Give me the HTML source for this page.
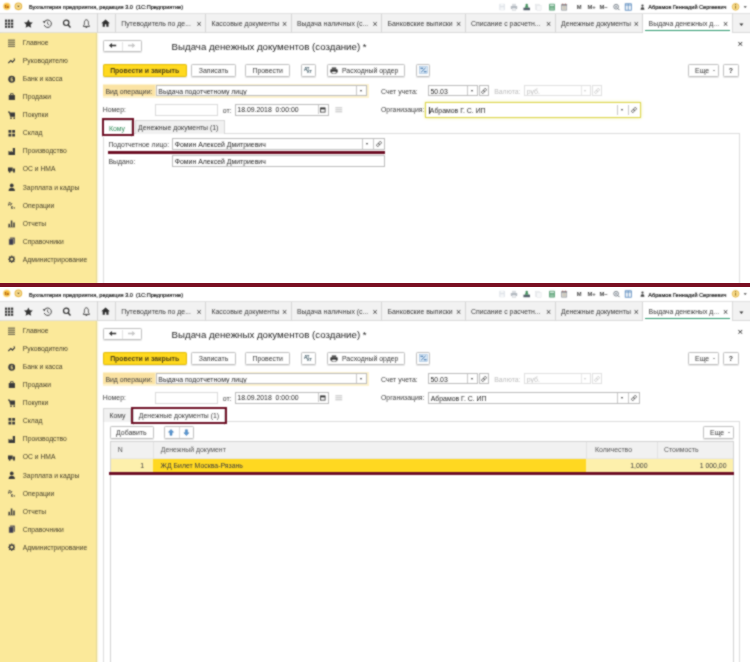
<!DOCTYPE html>
<html><head><meta charset="utf-8"><title>1C</title><style>
html,body{margin:0;padding:0;background:#fff}
body{width:750px;height:662px;position:relative;overflow:hidden;font-family:"Liberation Sans",sans-serif;font-size:7px;color:#333}
.scr{position:absolute;left:0;width:750px;overflow:hidden;will-change:transform;background:#fff;filter:url(#bl)}
.ab{position:absolute;white-space:nowrap}
.tb{position:absolute;left:0;top:0;width:750px;height:13px;background:#fff}
.tt{font-size:5.6px;line-height:7px;color:#151515;-webkit-text-stroke:0.18px #222}
.bar{position:absolute;left:0;top:13.2px;width:750px;height:19.6px;background:#f2f2f2;border-top:1px solid #e0e0e0;border-bottom:1px solid #dadada;box-sizing:border-box}
.tab{position:absolute;top:14.2px;height:18.6px;box-sizing:border-box;border-left:1px solid #d6d6d6;font-size:6.9px;line-height:18px;color:#383838;white-space:nowrap}
.tab .tl{position:absolute;left:5.2px;top:0.7px}
.tab .tx{position:absolute;right:3.6px;top:0.5px;font-size:8.8px;color:#444}
.tab.act{background:#fff}
.tab.act:after{content:"";position:absolute;left:1.5px;right:1.5px;top:15.6px;height:1.5px;background:#2f9a70}
.tab.act .tx{right:3.6px}
.side{position:absolute;left:0;top:32.8px;width:97px;background:#fbe99a;border-right:1px solid #e3d896;box-sizing:border-box;box-shadow:1px 0 1.5px rgba(250,240,190,.8)}
.sl{font-size:6.75px;line-height:8.4px;color:#453f2a}
.h1{font-size:9.7px;line-height:11.6px;color:#1c1c1c}
.btn{box-sizing:border-box;border:1px solid #c0c0c0;border-radius:1.6px;background:#fff;font-size:6.9px;line-height:11.6px;text-align:center;color:#363636;box-shadow:0 0.6px 0.8px rgba(0,0,0,.10)}
.btn.y{background:#ffd91f;border-color:#e3bd0a;color:#4a3f18}
.lb{font-size:6.9px;line-height:8.2px;color:#3c3c3c}
.inp{box-sizing:border-box;border:1px solid #bcbcbc;background:#fff;font-size:6.9px;line-height:8.2px;padding:1px 0 0 1.8px;color:#262626;overflow:hidden}
.vs{width:1px;background:#c8c8c8}
.dd{width:0;height:0;border-left:1.7px solid transparent;border-right:1.7px solid transparent;border-top:2.1px solid #444}
.ftab{box-sizing:border-box;border:1px solid #d6d6d6;border-bottom:none;background:#f1f1f1;font-size:6.9px;line-height:14.6px;text-align:center;color:#383838}
.ftab.on{background:#fff;line-height:14.6px}
.red{box-sizing:border-box;border:2.2px solid #6e1026}
</style></head><body>
<svg width="0" height="0" style="position:absolute"><filter id="bl" x="0" y="0" width="100%" height="100%" color-interpolation-filters="sRGB"><feConvolveMatrix order="3" kernelMatrix="1 2 1 2 8 2 1 2 1" divisor="20" edgeMode="duplicate"/></filter></svg>
<div class="scr" style="top:0px;height:283px">
<div class="tb"></div>
<svg class="ab" style="left:2px;top:2px" width="22" height="10" viewBox="0 0 22 10"><defs><radialGradient id="lg1"><stop offset="0.45" stop-color="#f6b62e"/><stop offset="1" stop-color="#fde6a0"/></radialGradient></defs><circle cx="4.8" cy="4.3" r="3.9" fill="url(#lg1)"/><text x="2.5" y="5.8" font-size="4.2" font-weight="bold" fill="#8a3a0c" font-family="Liberation Sans">1с</text><circle cx="16.4" cy="4.3" r="3.3" fill="#f7dc92" stroke="#e6b648" stroke-width="1.1"/><path d="M15.1 3.7h2.6l-1.3 1.6z" fill="#5a3c08"/></svg>
<div class="ab tt" style="left:29px;top:4.4px">Бухгалтерия предприятия, редакция 3.0&nbsp; (1С:Предприятие)</div>
<svg class="ab" style="left:496px;top:1px" width="254" height="12" viewBox="0 0 254 12"><g transform="translate(6.4 6.2) scale(0.8) translate(-6.4 -6.2)"><g opacity="0.55"><rect x="2.5" y="2" width="7" height="8" rx="0.8" fill="#c5cdd6"/><rect x="4" y="2" width="4" height="2.6" fill="#eef1f4"/><rect x="3.8" y="6.2" width="4.4" height="3.8" fill="#eef1f4"/></g></g><g transform="translate(18 6.2) scale(0.8) translate(-18 -6.2)"><g opacity="0.75"><rect x="14" y="4.6" width="8" height="4" rx="0.8" fill="#9aa2ab"/><rect x="15.6" y="2" width="4.8" height="2.8" fill="#c9ced4"/><rect x="15.6" y="7.2" width="4.8" height="3" fill="#e6e9ec" stroke="#9aa2ab" stroke-width="0.4"/></g></g><g transform="translate(30.7 6.2) scale(0.8) translate(-30.7 -6.2)"><g><rect x="26.6" y="6.8" width="8.2" height="3.2" fill="#55606b"/><circle cx="30.7" cy="3.4" r="1.5" fill="#3f8f5a"/><path d="M28.4 7c0-2 1-2.4 2.3-2.4s2.3 0.4 2.3 2.4z" fill="#3f8f5a"/></g></g><g transform="translate(42.4 6.2) scale(0.8) translate(-42.4 -6.2)"><g opacity="0.45"><rect x="38.4" y="2.4" width="5.4" height="6.8" fill="#e4e7ea" stroke="#aab1b8" stroke-width="0.5"/><rect x="40.4" y="4" width="5.4" height="6" fill="#eef0f2" stroke="#aab1b8" stroke-width="0.5"/></g></g><g transform="translate(56 6.2) scale(0.8) translate(-56 -6.2)"><g><rect x="52.4" y="1.8" width="7.2" height="8.6" rx="0.6" fill="#4f9a6c"/><rect x="53.4" y="2.8" width="5.2" height="2" fill="#d7eadf"/><path d="M53.4 6.2h5.2M53.4 7.8h5.2M53.4 9.3h5.2" stroke="#cfe6d8" stroke-width="0.7"/></g></g><g transform="translate(68.1 6.2) scale(0.8) translate(-68.1 -6.2)"><g><rect x="64.4" y="2.2" width="7.4" height="8" rx="0.6" fill="#8a8f96"/><rect x="65.2" y="4.4" width="5.8" height="5" fill="#f0efe9"/><path d="M66 5.6h4.2M66 7h4.2M66 8.4h4.2" stroke="#9b8f7b" stroke-width="0.6"/><path d="M66.3 1.6v1.6M69.9 1.6v1.6" stroke="#b0463c" stroke-width="0.8"/></g></g><text x="80.8" y="8.4" font-size="5.8" font-weight="bold" fill="#444" font-family="Liberation Sans">M</text><text x="91.4" y="8.4" font-size="5.8" font-weight="bold" fill="#444" font-family="Liberation Sans">M+</text><text x="103.4" y="8.4" font-size="5.8" font-weight="bold" fill="#444" font-family="Liberation Sans">M−</text><g transform="translate(120.6 6.2) scale(0.8) translate(-120.6 -6.2)"><g><circle cx="120" cy="5.6" r="3" fill="#eef2f5" stroke="#5d6670" stroke-width="0.9"/><path d="M122.2 7.8l2 2" stroke="#5d6670" stroke-width="1.2"/><path d="M118.6 5.6h2.8M120 4.2v2.8" stroke="#5d6670" stroke-width="0.6"/></g></g><g transform="translate(132.4 6) scale(0.8) translate(-132.4 -6)"><g><rect x="128.4" y="2" width="7.6" height="8" fill="#f2f6fa" stroke="#3f78b4" stroke-width="0.9"/><path d="M132.2 2v8M128.4 3.6h7.6" stroke="#3f78b4" stroke-width="0.8"/></g></g><g fill="#444"><circle cx="146.5" cy="4.6" r="1.15"/><path d="M144.6 8.8c0-2 0.8-2.5 1.9-2.5s1.9 0.5 1.9 2.5z"/></g><circle cx="239.6" cy="5.8" r="3.4" fill="#f8dc8c" stroke="#dfae3a" stroke-width="0.7"/><path d="M239.6 4.8v2.8" stroke="#8a6410" stroke-width="0.9"/><circle cx="239.6" cy="3.6" r="0.55" fill="#8a6410"/><path d="M247.6 5.2h3.2l-1.6 1.8z" fill="#444"/></svg>
<div class="ab tt" style="left:648.3px;top:4.4px">Абрамов Геннадий Сергеевич</div>
<div class="bar"></div>
<svg class="ab" style="left:0.2px;top:12.7px" width="97" height="19" viewBox="0 0 97 19"><g fill="#333"><rect x="5" y="6.6" width="2.2" height="2.2"/><rect x="8" y="6.6" width="2.2" height="2.2"/><rect x="11" y="6.6" width="2.2" height="2.2"/><rect x="5" y="9.6" width="2.2" height="2.2"/><rect x="8" y="9.6" width="2.2" height="2.2"/><rect x="11" y="9.6" width="2.2" height="2.2"/><rect x="5" y="12.6" width="2.2" height="2.2"/><rect x="8" y="12.6" width="2.2" height="2.2"/><rect x="11" y="12.6" width="2.2" height="2.2"/></g><path d="M28.4 6.4l1.3 2.9l3.1 0.3l-2.3 2.1l0.7 3.1l-2.8-1.6l-2.8 1.6l0.7-3.1l-2.3-2.1l3.1-0.3z" fill="#333"/><g stroke="#444" fill="none"><path d="M44.8 8.4a3.7 3.7 0 1 1-0.6 3.6" stroke-width="1"/><path d="M47.6 8.6v2.4l1.6 1" stroke-width="0.8"/></g><path d="M42.6 8.4l2.8-0.6l-0.8 2.6z" fill="#444"/><circle cx="66.2" cy="9.8" r="2.7" stroke="#333" stroke-width="1.2" fill="none"/><path d="M68.2 12l2.3 2.5" stroke="#333" stroke-width="1.4"/><path d="M83.4 13.4h6v-0.6c-1-0.6-1-1.6-1-3.2c0-1.6-0.8-2.8-2-2.8s-2 1.2-2 2.8c0 1.6 0 2.6-1 3.2z" stroke="#333" stroke-width="0.9" fill="none"/><path d="M85.6 14.4h1.6" stroke="#333" stroke-width="0.9"/></svg>
<div class="ab" style="left:96.5px;top:13.2px;width:1px;height:19.6px;background:#d4d4d4"></div>
<svg class="ab" style="left:100.9px;top:18.5px" width="9.2" height="8.3" viewBox="0 0 10 9"><path d="M5 0.4L0.4 4.6h1.4v3.8h2.4V5.8h1.6v2.6h2.4V4.6h1.4z" fill="#2f2f2f"/></svg>
<div class="tab" style="left:115px;width:90.30000000000001px"><span class="tl">Путеводитель по де...</span><span class="tx">×</span></div>
<div class="tab" style="left:205.3px;width:85.5px"><span class="tl">Кассовые документы</span><span class="tx">×</span></div>
<div class="tab" style="left:290.8px;width:90.5px"><span class="tl">Выдача наличных (с...</span><span class="tx">×</span></div>
<div class="tab" style="left:381.3px;width:83.5px"><span class="tl">Банковские выписки</span><span class="tx">×</span></div>
<div class="tab" style="left:464.8px;width:89.99999999999994px"><span class="tl">Списание с расчетн...</span><span class="tx">×</span></div>
<div class="tab" style="left:554.8px;width:87.60000000000002px"><span class="tl">Денежные документы</span><span class="tx">×</span></div>
<div class="tab act" style="left:642.4px;width:89.39999999999998px"><span class="tl">Выдача денежных д...</span><span class="tx">×</span></div>
<div class="ab" style="left:731.8px;top:13.2px;width:1px;height:19.6px;background:#d9d9d9"></div>
<svg class="ab" style="left:738px;top:23.4px" width="8" height="5" viewBox="0 0 8 5"><path d="M1.4 0.6h4l-2 2.3z" fill="#333"/></svg>
<div class="side" style="height:251px"></div>
<svg class="ab" style="left:7.6px;top:38.7px" width="7.5" height="8.44" viewBox="0 0 8 9"><path d="M0 1.2h8M0 3.4h8M0 5.6h8M0 7.8h8" stroke="#333" stroke-width="0.9" fill="none"/></svg>
<div class="ab sl" style="left:22.8px;top:39.0px">Главное</div>
<svg class="ab" style="left:7.6px;top:56.8px" width="7.5" height="8.44" viewBox="0 0 8 9"><path d="M0.3 6.5L3 3.8L4.8 5.4L7.6 2.4" stroke="#3b3b3b" stroke-width="1.3" fill="none"/><path d="M5.6 1.6h2.6v2.6z" fill="#3b3b3b"/></svg>
<div class="ab sl" style="left:22.8px;top:57.1px">Руководителю</div>
<svg class="ab" style="left:7.6px;top:74.8px" width="7.5" height="8.44" viewBox="0 0 8 9"><circle cx="4" cy="4.5" r="3.7" fill="#3b3b3b"/><path d="M3 3h2.2M3.3 3v3.2h1.6V4.6H3.3" stroke="#fbe99a" stroke-width="0.8" fill="none"/></svg>
<div class="ab sl" style="left:22.8px;top:75.1px">Банк и касса</div>
<svg class="ab" style="left:7.6px;top:92.9px" width="7.5" height="8.44" viewBox="0 0 8 9"><path d="M0.8 2.2h6.6v5.2H0.8z" fill="#3b3b3b"/><path d="M2.7 2.2V0.7h2.8v1.5" stroke="#3b3b3b" stroke-width="0.9" fill="none"/></svg>
<div class="ab sl" style="left:22.8px;top:93.2px">Продажи</div>
<svg class="ab" style="left:7.6px;top:110.9px" width="7.5" height="8.44" viewBox="0 0 8 9"><path d="M0 1h1.5l1.2 4.6h4.6l0.9-3.4H2" stroke="#3b3b3b" stroke-width="1.1" fill="#3b3b3b"/><circle cx="3.2" cy="7.6" r="0.9" fill="#3b3b3b"/><circle cx="6.6" cy="7.6" r="0.9" fill="#3b3b3b"/></svg>
<div class="ab sl" style="left:22.8px;top:111.2px">Покупки</div>
<svg class="ab" style="left:7.6px;top:129.0px" width="7.5" height="8.44" viewBox="0 0 8 9"><path d="M0.5 1h3v3h-3zM4.5 1h3v3h-3zM0.5 5h3v3h-3zM4.5 5h3v3h-3z" fill="#3b3b3b"/></svg>
<div class="ab sl" style="left:22.8px;top:129.3px">Склад</div>
<svg class="ab" style="left:7.6px;top:147.1px" width="7.5" height="8.44" viewBox="0 0 8 9"><path d="M0.5 8.5V4l2.3 1.6V4l2.3 1.6V1h2.4v7.5z" fill="#3b3b3b"/></svg>
<div class="ab sl" style="left:22.8px;top:147.4px">Производство</div>
<svg class="ab" style="left:7.6px;top:165.1px" width="7.5" height="8.44" viewBox="0 0 8 9"><path d="M0 2.6h5v4H0zM5.4 3.8h1.8l1 1.4v1.4H5.4z" fill="#3b3b3b"/><circle cx="1.8" cy="7.2" r="1" fill="#3b3b3b"/><circle cx="6.4" cy="7.2" r="1" fill="#3b3b3b"/></svg>
<div class="ab sl" style="left:22.8px;top:165.4px">ОС и НМА</div>
<svg class="ab" style="left:7.6px;top:183.2px" width="7.5" height="8.44" viewBox="0 0 8 9"><circle cx="4" cy="2.6" r="2" fill="#3b3b3b"/><path d="M0.6 8.6c0-3 1.6-3.6 3.4-3.6s3.4 0.6 3.4 3.6z" fill="#3b3b3b"/></svg>
<div class="ab sl" style="left:22.8px;top:183.5px">Зарплата и кадры</div>
<svg class="ab" style="left:7.6px;top:201.2px" width="7.5" height="8.44" viewBox="0 0 8 9"><text x="0" y="4" font-size="4.2" font-weight="bold" fill="#3b3b3b" font-family="Liberation Sans">Дт</text><text x="3" y="8.4" font-size="4.2" font-weight="bold" fill="#3b3b3b" font-family="Liberation Sans">Кт</text></svg>
<div class="ab sl" style="left:22.8px;top:201.5px">Операции</div>
<svg class="ab" style="left:7.6px;top:219.3px" width="7.5" height="8.44" viewBox="0 0 8 9"><path d="M0.5 8.5V5h1.6v3.5zM3 8.5V1.5h1.6v7zM5.6 8.5V3.6h1.6v4.9z" fill="#3b3b3b"/><path d="M0 8.6h8" stroke="#3b3b3b" stroke-width="0.6"/></svg>
<div class="ab sl" style="left:22.8px;top:219.6px">Отчеты</div>
<svg class="ab" style="left:7.6px;top:237.4px" width="7.5" height="8.44" viewBox="0 0 8 9"><path d="M2.2 0.6h5v6.6h-5z" fill="#3b3b50"/><path d="M0.9 1.9h4.9v6.6H0.9z" fill="#3b3b50" stroke="#fbe99a" stroke-width="0.5"/></svg>
<div class="ab sl" style="left:22.8px;top:237.7px">Справочники</div>
<svg class="ab" style="left:7.6px;top:255.4px" width="7.5" height="8.44" viewBox="0 0 8 9"><circle cx="4" cy="4.5" r="2.3" stroke="#3b3b3b" stroke-width="1.5" fill="none"/><path d="M4 0.6v1.2M4 7.2v1.2M0.1 4.5h1.2M6.7 4.5h1.2M1.2 1.7l0.9 0.9M5.9 6.4l0.9 0.9M1.2 7.3l0.9-0.9M5.9 2.6l0.9-0.9" stroke="#3b3b3b" stroke-width="1.1"/></svg>
<div class="ab sl" style="left:22.8px;top:255.7px">Администрирование</div>
<div class="ab btn" style="left:103px;top:40px;width:38.8px;height:11.8px"></div>
<div class="ab" style="left:122px;top:41.5px;width:1px;height:9px;background:#e3e3e3"></div>
<svg class="ab" style="left:107px;top:42.1px" width="30" height="7" viewBox="0 0 30 7"><path d="M2 3.5L5 0.9v1.9h4.2v1.4H5v1.9z" fill="#333"/><path d="M28.2 3.5L25.2 0.9v1.9H21v1.4h4.2v1.9z" fill="#c4c4c4"/></svg>
<div class="ab h1" style="left:171.6px;top:40.8px">Выдача денежных документов (создание) *</div>
<div class="ab" style="left:737.6px;top:38.8px;font-size:9.6px;color:#222;line-height:10px">×</div>
<div class="ab btn y" style="left:102.8px;top:64px;width:83.8px;height:13.2px"><b>Провести и закрыть</b></div>
<div class="ab btn" style="left:191.2px;top:64px;width:44.7px;height:13.2px">Записать</div>
<div class="ab btn" style="left:245.4px;top:64px;width:44.6px;height:13.2px">Провести</div>
<div class="ab btn" style="left:300.6px;top:64px;width:15.2px;height:13.2px"></div>
<svg class="ab" style="left:303.6px;top:66px" width="10" height="9" viewBox="0 0 10 9"><text x="0.3" y="3.6" font-size="3.7" font-weight="bold" fill="#2c4a57" font-family="Liberation Sans">ДТ</text><text x="3.2" y="7.4" font-size="3.7" font-weight="bold" fill="#2c4a57" font-family="Liberation Sans">КТ</text></svg>
<div class="ab btn" style="left:326.7px;top:64px;width:78.8px;height:13.2px;text-align:left;padding-left:14.3px;box-sizing:border-box">Расходный ордер</div>
<svg class="ab" style="left:330.4px;top:66.8px" width="8" height="7.2" viewBox="0 0 9 8"><rect x="0.4" y="2.6" width="8.2" height="3.6" rx="0.6" fill="#333"/><rect x="2" y="0.4" width="5" height="2.2" fill="#555"/><rect x="2.2" y="4.8" width="4.6" height="2.8" fill="#fff" stroke="#333" stroke-width="0.5"/></svg>
<div class="ab btn" style="left:416px;top:64px;width:14px;height:13.2px"></div>
<svg class="ab" style="left:418.6px;top:66.2px" width="9" height="8.2" viewBox="0 0 10 9"><rect x="0.6" y="0.6" width="8.6" height="7.6" fill="#dbe9f6" stroke="#8fb3d9" stroke-width="0.6"/><path d="M2.4 6.8L7.4 2" stroke="#2f68a4" stroke-width="0.9"/><path d="M1.6 2.4h3M5.4 6.4h3" stroke="#2f68a4" stroke-width="1.2"/></svg>
<div class="ab btn" style="left:687.5px;top:64px;width:31.2px;height:13.2px;text-align:left;padding-left:6.6px">Еще<span class="dd" style="position:absolute;left:24.6px;top:5.2px;border-left-width:1.4px;border-right-width:1.4px;border-top-width:1.8px"></span></div>
<div class="ab btn" style="left:723px;top:64px;width:15.8px;height:13.2px"><b>?</b></div>
<div class="ab" style="left:103.2px;top:84px;width:266px;height:14.4px;background:#fdf2cf"></div>
<div class="ab" style="left:103.2px;top:85.2px;width:52px;height:10.8px;background:#fbe3a4"></div>
<div class="ab lb" style="left:105.4px;top:88px">Вид операции:</div>
<div class="ab inp" style="left:155.5px;top:85.4px;width:211.7px;height:10.6px;padding-top:1.7px">Выдача подотчетному лицу</div>
<div class="ab vs" style="left:356.3px;top:86.4px;height:8.6px"></div><div class="ab dd" style="left:360.2px;top:90px"></div>
<div class="ab lb" style="left:102.8px;top:106.3px">Номер:</div>
<div class="ab inp" style="left:155.2px;top:104.2px;width:62.4px;height:11.7px;border-color:#dadada"></div>
<div class="ab lb" style="left:222.8px;top:106.5px">от:</div>
<div class="ab inp" style="left:234.5px;top:104.2px;width:94px;height:11.7px;padding-top:1.3px">18.09.2018&nbsp; 0:00:00</div>
<div class="ab vs" style="left:317.6px;top:105.2px;height:9.2px"></div>
<svg class="ab" style="left:319.8px;top:107.2px" width="6" height="6" viewBox="0 0 6 6"><rect x="0.5" y="0.9" width="4.6" height="4.2" fill="#fff" stroke="#333" stroke-width="0.8"/><rect x="0.5" y="0.9" width="4.6" height="1.5" fill="#333"/></svg>
<svg class="ab" style="left:335.4px;top:107px" width="8" height="6" viewBox="0 0 8 6"><path d="M0.4 0.8h6.8M0.4 2.8h6.8M0.4 4.8h6.8" stroke="#b8b8b8" stroke-width="0.9"/></svg>
<div class="ab lb" style="left:381px;top:87.8px">Счет учета:</div>
<div class="ab inp" style="left:427.7px;top:85.4px;width:50.6px;height:10.6px;padding-left:1.8px;padding-top:1.6px">50.03</div>
<div class="ab vs" style="left:467px;top:86.4px;height:8.6px"></div><div class="ab dd" style="left:470.6px;top:90px"></div>
<div class="ab inp" style="left:478.6px;top:85.4px;width:10px;height:10.6px;padding:0"></div>
<svg class="ab" style="left:480.8px;top:87.8px" width="6" height="6" viewBox="0 0 6 6"><g transform="rotate(-45 3 3)" fill="none" stroke="#555" stroke-width="0.8"><rect x="0" y="1.9" width="3.4" height="2.2" rx="1.1"/><rect x="2.6" y="1.9" width="3.4" height="2.2" rx="1.1"/></g></svg>
<div class="ab lb" style="left:494.2px;top:87.8px;color:#bdbdbd">Валюта:</div>
<div class="ab inp" style="left:524px;top:85.4px;width:67px;height:10.6px;padding-top:1.6px;color:#bdbdbd;border-color:#e0e0e0">руб.</div>
<div class="ab vs" style="left:580.6px;top:86.4px;height:8.6px;background:#e8e8e8"></div><div class="ab dd" style="left:584.2px;top:90px;border-top-color:#cccccc"></div>
<div class="ab inp" style="left:591.6px;top:85.4px;width:10.8px;height:10.6px;padding:0;border-color:#e0e0e0"></div>
<svg class="ab" style="left:594.2px;top:87.8px" width="6" height="6" viewBox="0 0 6 6"><g transform="rotate(-45 3 3)" fill="none" stroke="#cccccc" stroke-width="0.8"><rect x="0" y="1.9" width="3.4" height="2.2" rx="1.1"/><rect x="2.6" y="1.9" width="3.4" height="2.2" rx="1.1"/></g></svg>
<div class="ab lb" style="left:381px;top:106.2px">Организация:</div>
<div class="ab inp" style="left:425.3px;top:102.3px;width:215.4px;height:15.7px;border:1.5px solid #dcd54a;box-shadow:0 0 3px rgba(232,232,120,.75);padding-top:3.5px;padding-left:3.4px"><span style="border-left:0.9px solid #222;margin-left:-0.9px"></span>Абрамов Г. С. ИП</div>
<div class="ab vs" style="left:617.4px;top:105.2px;height:9.6px"></div><div class="ab dd" style="left:620.8px;top:109.2px"></div>
<div class="ab vs" style="left:628px;top:105.2px;height:9.6px"></div>
<svg class="ab" style="left:631.2px;top:107px" width="6" height="6" viewBox="0 0 6 6"><g transform="rotate(-45 3 3)" fill="none" stroke="#555" stroke-width="0.8"><rect x="0" y="1.9" width="3.4" height="2.2" rx="1.1"/><rect x="2.6" y="1.9" width="3.4" height="2.2" rx="1.1"/></g></svg>
<div class="ab" style="left:103px;top:133.4px;width:637px;height:149.6px;border:1.5px solid #dcdcdc;border-bottom:none;box-sizing:border-box;background:#fff"></div>
<div class="ab ftab" style="left:135px;top:120px;width:90px;height:14px;text-align:left;padding-left:2.1px">Денежные документы (1)</div>
<div class="ab ftab on" style="left:102px;top:120px;width:30px;height:16.5px;color:#2e8b57;line-height:15.4px">Кому</div>
<div class="ab red" style="left:101.5px;top:118.2px;width:32.3px;height:18px"></div>
<div class="ab lb" style="left:108.4px;top:141px">Подотчетное лицо:</div>
<div class="ab inp" style="left:172px;top:138.2px;width:212.6px;height:11.6px;padding-top:2px">Фомин Алексей Дмитриевич</div>
<div class="ab vs" style="left:362.3px;top:139.2px;height:9.6px"></div><div class="ab dd" style="left:365.8px;top:143.4px"></div>
<div class="ab vs" style="left:373.3px;top:139.2px;height:9.6px"></div>
<svg class="ab" style="left:376px;top:141.2px" width="6" height="6" viewBox="0 0 6 6"><g transform="rotate(-45 3 3)" fill="none" stroke="#555" stroke-width="0.8"><rect x="0" y="1.9" width="3.4" height="2.2" rx="1.1"/><rect x="2.6" y="1.9" width="3.4" height="2.2" rx="1.1"/></g></svg>
<div class="ab lb" style="left:108.4px;top:158.1px">Выдано:</div>
<div class="ab inp" style="left:172px;top:155.4px;width:212.6px;height:11.6px;padding-top:2px">Фомин Алексей Дмитриевич</div>
<div class="ab" style="left:107.8px;top:151.3px;width:276.8px;height:2.4px;background:#6e1026"></div>
</div>
<div class="ab" style="left:0;top:283px;width:750px;height:3.5px;background:#7a0f22"></div>
<div class="scr" style="top:288px;height:374px">
<div class="tb"></div>
<svg class="ab" style="left:2px;top:1.4px" width="22" height="10" viewBox="0 0 22 10"><defs><radialGradient id="lg2"><stop offset="0.45" stop-color="#f6b62e"/><stop offset="1" stop-color="#fde6a0"/></radialGradient></defs><circle cx="4.8" cy="4.3" r="3.9" fill="url(#lg2)"/><text x="2.5" y="5.8" font-size="4.2" font-weight="bold" fill="#8a3a0c" font-family="Liberation Sans">1с</text><circle cx="16.4" cy="4.3" r="3.3" fill="#f7dc92" stroke="#e6b648" stroke-width="1.1"/><path d="M15.1 3.7h2.6l-1.3 1.6z" fill="#5a3c08"/></svg>
<div class="ab tt" style="left:29px;top:3.8000000000000003px">Бухгалтерия предприятия, редакция 3.0&nbsp; (1С:Предприятие)</div>
<svg class="ab" style="left:496px;top:0.4px" width="254" height="12" viewBox="0 0 254 12"><g transform="translate(6.4 6.2) scale(0.8) translate(-6.4 -6.2)"><g opacity="0.55"><rect x="2.5" y="2" width="7" height="8" rx="0.8" fill="#c5cdd6"/><rect x="4" y="2" width="4" height="2.6" fill="#eef1f4"/><rect x="3.8" y="6.2" width="4.4" height="3.8" fill="#eef1f4"/></g></g><g transform="translate(18 6.2) scale(0.8) translate(-18 -6.2)"><g opacity="0.75"><rect x="14" y="4.6" width="8" height="4" rx="0.8" fill="#9aa2ab"/><rect x="15.6" y="2" width="4.8" height="2.8" fill="#c9ced4"/><rect x="15.6" y="7.2" width="4.8" height="3" fill="#e6e9ec" stroke="#9aa2ab" stroke-width="0.4"/></g></g><g transform="translate(30.7 6.2) scale(0.8) translate(-30.7 -6.2)"><g><rect x="26.6" y="6.8" width="8.2" height="3.2" fill="#55606b"/><circle cx="30.7" cy="3.4" r="1.5" fill="#3f8f5a"/><path d="M28.4 7c0-2 1-2.4 2.3-2.4s2.3 0.4 2.3 2.4z" fill="#3f8f5a"/></g></g><g transform="translate(42.4 6.2) scale(0.8) translate(-42.4 -6.2)"><g opacity="0.45"><rect x="38.4" y="2.4" width="5.4" height="6.8" fill="#e4e7ea" stroke="#aab1b8" stroke-width="0.5"/><rect x="40.4" y="4" width="5.4" height="6" fill="#eef0f2" stroke="#aab1b8" stroke-width="0.5"/></g></g><g transform="translate(56 6.2) scale(0.8) translate(-56 -6.2)"><g><rect x="52.4" y="1.8" width="7.2" height="8.6" rx="0.6" fill="#4f9a6c"/><rect x="53.4" y="2.8" width="5.2" height="2" fill="#d7eadf"/><path d="M53.4 6.2h5.2M53.4 7.8h5.2M53.4 9.3h5.2" stroke="#cfe6d8" stroke-width="0.7"/></g></g><g transform="translate(68.1 6.2) scale(0.8) translate(-68.1 -6.2)"><g><rect x="64.4" y="2.2" width="7.4" height="8" rx="0.6" fill="#8a8f96"/><rect x="65.2" y="4.4" width="5.8" height="5" fill="#f0efe9"/><path d="M66 5.6h4.2M66 7h4.2M66 8.4h4.2" stroke="#9b8f7b" stroke-width="0.6"/><path d="M66.3 1.6v1.6M69.9 1.6v1.6" stroke="#b0463c" stroke-width="0.8"/></g></g><text x="80.8" y="8.4" font-size="5.8" font-weight="bold" fill="#444" font-family="Liberation Sans">M</text><text x="91.4" y="8.4" font-size="5.8" font-weight="bold" fill="#444" font-family="Liberation Sans">M+</text><text x="103.4" y="8.4" font-size="5.8" font-weight="bold" fill="#444" font-family="Liberation Sans">M−</text><g transform="translate(120.6 6.2) scale(0.8) translate(-120.6 -6.2)"><g><circle cx="120" cy="5.6" r="3" fill="#eef2f5" stroke="#5d6670" stroke-width="0.9"/><path d="M122.2 7.8l2 2" stroke="#5d6670" stroke-width="1.2"/><path d="M118.6 5.6h2.8M120 4.2v2.8" stroke="#5d6670" stroke-width="0.6"/></g></g><g transform="translate(132.4 6) scale(0.8) translate(-132.4 -6)"><g><rect x="128.4" y="2" width="7.6" height="8" fill="#f2f6fa" stroke="#3f78b4" stroke-width="0.9"/><path d="M132.2 2v8M128.4 3.6h7.6" stroke="#3f78b4" stroke-width="0.8"/></g></g><g fill="#444"><circle cx="146.5" cy="4.6" r="1.15"/><path d="M144.6 8.8c0-2 0.8-2.5 1.9-2.5s1.9 0.5 1.9 2.5z"/></g><circle cx="239.6" cy="5.8" r="3.4" fill="#f8dc8c" stroke="#dfae3a" stroke-width="0.7"/><path d="M239.6 4.8v2.8" stroke="#8a6410" stroke-width="0.9"/><circle cx="239.6" cy="3.6" r="0.55" fill="#8a6410"/><path d="M247.6 5.2h3.2l-1.6 1.8z" fill="#444"/></svg>
<div class="ab tt" style="left:648.3px;top:3.8000000000000003px">Абрамов Геннадий Сергеевич</div>
<div class="bar"></div>
<svg class="ab" style="left:0.2px;top:12.7px" width="97" height="19" viewBox="0 0 97 19"><g fill="#333"><rect x="5" y="6.6" width="2.2" height="2.2"/><rect x="8" y="6.6" width="2.2" height="2.2"/><rect x="11" y="6.6" width="2.2" height="2.2"/><rect x="5" y="9.6" width="2.2" height="2.2"/><rect x="8" y="9.6" width="2.2" height="2.2"/><rect x="11" y="9.6" width="2.2" height="2.2"/><rect x="5" y="12.6" width="2.2" height="2.2"/><rect x="8" y="12.6" width="2.2" height="2.2"/><rect x="11" y="12.6" width="2.2" height="2.2"/></g><path d="M28.4 6.4l1.3 2.9l3.1 0.3l-2.3 2.1l0.7 3.1l-2.8-1.6l-2.8 1.6l0.7-3.1l-2.3-2.1l3.1-0.3z" fill="#333"/><g stroke="#444" fill="none"><path d="M44.8 8.4a3.7 3.7 0 1 1-0.6 3.6" stroke-width="1"/><path d="M47.6 8.6v2.4l1.6 1" stroke-width="0.8"/></g><path d="M42.6 8.4l2.8-0.6l-0.8 2.6z" fill="#444"/><circle cx="66.2" cy="9.8" r="2.7" stroke="#333" stroke-width="1.2" fill="none"/><path d="M68.2 12l2.3 2.5" stroke="#333" stroke-width="1.4"/><path d="M83.4 13.4h6v-0.6c-1-0.6-1-1.6-1-3.2c0-1.6-0.8-2.8-2-2.8s-2 1.2-2 2.8c0 1.6 0 2.6-1 3.2z" stroke="#333" stroke-width="0.9" fill="none"/><path d="M85.6 14.4h1.6" stroke="#333" stroke-width="0.9"/></svg>
<div class="ab" style="left:96.5px;top:13.2px;width:1px;height:19.6px;background:#d4d4d4"></div>
<svg class="ab" style="left:100.9px;top:18.5px" width="9.2" height="8.3" viewBox="0 0 10 9"><path d="M5 0.4L0.4 4.6h1.4v3.8h2.4V5.8h1.6v2.6h2.4V4.6h1.4z" fill="#2f2f2f"/></svg>
<div class="tab" style="left:115px;width:90.30000000000001px"><span class="tl">Путеводитель по де...</span><span class="tx">×</span></div>
<div class="tab" style="left:205.3px;width:85.5px"><span class="tl">Кассовые документы</span><span class="tx">×</span></div>
<div class="tab" style="left:290.8px;width:90.5px"><span class="tl">Выдача наличных (с...</span><span class="tx">×</span></div>
<div class="tab" style="left:381.3px;width:83.5px"><span class="tl">Банковские выписки</span><span class="tx">×</span></div>
<div class="tab" style="left:464.8px;width:89.99999999999994px"><span class="tl">Списание с расчетн...</span><span class="tx">×</span></div>
<div class="tab" style="left:554.8px;width:87.60000000000002px"><span class="tl">Денежные документы</span><span class="tx">×</span></div>
<div class="tab act" style="left:642.4px;width:89.39999999999998px"><span class="tl">Выдача денежных д...</span><span class="tx">×</span></div>
<div class="ab" style="left:731.8px;top:13.2px;width:1px;height:19.6px;background:#d9d9d9"></div>
<svg class="ab" style="left:738px;top:23.4px" width="8" height="5" viewBox="0 0 8 5"><path d="M1.4 0.6h4l-2 2.3z" fill="#333"/></svg>
<div class="side" style="height:342px"></div>
<svg class="ab" style="left:7.6px;top:38.7px" width="7.5" height="8.44" viewBox="0 0 8 9"><path d="M0 1.2h8M0 3.4h8M0 5.6h8M0 7.8h8" stroke="#333" stroke-width="0.9" fill="none"/></svg>
<div class="ab sl" style="left:22.8px;top:39.0px">Главное</div>
<svg class="ab" style="left:7.6px;top:56.8px" width="7.5" height="8.44" viewBox="0 0 8 9"><path d="M0.3 6.5L3 3.8L4.8 5.4L7.6 2.4" stroke="#3b3b3b" stroke-width="1.3" fill="none"/><path d="M5.6 1.6h2.6v2.6z" fill="#3b3b3b"/></svg>
<div class="ab sl" style="left:22.8px;top:57.1px">Руководителю</div>
<svg class="ab" style="left:7.6px;top:74.8px" width="7.5" height="8.44" viewBox="0 0 8 9"><circle cx="4" cy="4.5" r="3.7" fill="#3b3b3b"/><path d="M3 3h2.2M3.3 3v3.2h1.6V4.6H3.3" stroke="#fbe99a" stroke-width="0.8" fill="none"/></svg>
<div class="ab sl" style="left:22.8px;top:75.1px">Банк и касса</div>
<svg class="ab" style="left:7.6px;top:92.9px" width="7.5" height="8.44" viewBox="0 0 8 9"><path d="M0.8 2.2h6.6v5.2H0.8z" fill="#3b3b3b"/><path d="M2.7 2.2V0.7h2.8v1.5" stroke="#3b3b3b" stroke-width="0.9" fill="none"/></svg>
<div class="ab sl" style="left:22.8px;top:93.2px">Продажи</div>
<svg class="ab" style="left:7.6px;top:110.9px" width="7.5" height="8.44" viewBox="0 0 8 9"><path d="M0 1h1.5l1.2 4.6h4.6l0.9-3.4H2" stroke="#3b3b3b" stroke-width="1.1" fill="#3b3b3b"/><circle cx="3.2" cy="7.6" r="0.9" fill="#3b3b3b"/><circle cx="6.6" cy="7.6" r="0.9" fill="#3b3b3b"/></svg>
<div class="ab sl" style="left:22.8px;top:111.2px">Покупки</div>
<svg class="ab" style="left:7.6px;top:129.0px" width="7.5" height="8.44" viewBox="0 0 8 9"><path d="M0.5 1h3v3h-3zM4.5 1h3v3h-3zM0.5 5h3v3h-3zM4.5 5h3v3h-3z" fill="#3b3b3b"/></svg>
<div class="ab sl" style="left:22.8px;top:129.3px">Склад</div>
<svg class="ab" style="left:7.6px;top:147.1px" width="7.5" height="8.44" viewBox="0 0 8 9"><path d="M0.5 8.5V4l2.3 1.6V4l2.3 1.6V1h2.4v7.5z" fill="#3b3b3b"/></svg>
<div class="ab sl" style="left:22.8px;top:147.4px">Производство</div>
<svg class="ab" style="left:7.6px;top:165.1px" width="7.5" height="8.44" viewBox="0 0 8 9"><path d="M0 2.6h5v4H0zM5.4 3.8h1.8l1 1.4v1.4H5.4z" fill="#3b3b3b"/><circle cx="1.8" cy="7.2" r="1" fill="#3b3b3b"/><circle cx="6.4" cy="7.2" r="1" fill="#3b3b3b"/></svg>
<div class="ab sl" style="left:22.8px;top:165.4px">ОС и НМА</div>
<svg class="ab" style="left:7.6px;top:183.2px" width="7.5" height="8.44" viewBox="0 0 8 9"><circle cx="4" cy="2.6" r="2" fill="#3b3b3b"/><path d="M0.6 8.6c0-3 1.6-3.6 3.4-3.6s3.4 0.6 3.4 3.6z" fill="#3b3b3b"/></svg>
<div class="ab sl" style="left:22.8px;top:183.5px">Зарплата и кадры</div>
<svg class="ab" style="left:7.6px;top:201.2px" width="7.5" height="8.44" viewBox="0 0 8 9"><text x="0" y="4" font-size="4.2" font-weight="bold" fill="#3b3b3b" font-family="Liberation Sans">Дт</text><text x="3" y="8.4" font-size="4.2" font-weight="bold" fill="#3b3b3b" font-family="Liberation Sans">Кт</text></svg>
<div class="ab sl" style="left:22.8px;top:201.5px">Операции</div>
<svg class="ab" style="left:7.6px;top:219.3px" width="7.5" height="8.44" viewBox="0 0 8 9"><path d="M0.5 8.5V5h1.6v3.5zM3 8.5V1.5h1.6v7zM5.6 8.5V3.6h1.6v4.9z" fill="#3b3b3b"/><path d="M0 8.6h8" stroke="#3b3b3b" stroke-width="0.6"/></svg>
<div class="ab sl" style="left:22.8px;top:219.6px">Отчеты</div>
<svg class="ab" style="left:7.6px;top:237.4px" width="7.5" height="8.44" viewBox="0 0 8 9"><path d="M2.2 0.6h5v6.6h-5z" fill="#3b3b50"/><path d="M0.9 1.9h4.9v6.6H0.9z" fill="#3b3b50" stroke="#fbe99a" stroke-width="0.5"/></svg>
<div class="ab sl" style="left:22.8px;top:237.7px">Справочники</div>
<svg class="ab" style="left:7.6px;top:255.4px" width="7.5" height="8.44" viewBox="0 0 8 9"><circle cx="4" cy="4.5" r="2.3" stroke="#3b3b3b" stroke-width="1.5" fill="none"/><path d="M4 0.6v1.2M4 7.2v1.2M0.1 4.5h1.2M6.7 4.5h1.2M1.2 1.7l0.9 0.9M5.9 6.4l0.9 0.9M1.2 7.3l0.9-0.9M5.9 2.6l0.9-0.9" stroke="#3b3b3b" stroke-width="1.1"/></svg>
<div class="ab sl" style="left:22.8px;top:255.7px">Администрирование</div>
<div class="ab btn" style="left:103px;top:40px;width:38.8px;height:11.8px"></div>
<div class="ab" style="left:122px;top:41.5px;width:1px;height:9px;background:#e3e3e3"></div>
<svg class="ab" style="left:107px;top:42.1px" width="30" height="7" viewBox="0 0 30 7"><path d="M2 3.5L5 0.9v1.9h4.2v1.4H5v1.9z" fill="#333"/><path d="M28.2 3.5L25.2 0.9v1.9H21v1.4h4.2v1.9z" fill="#c4c4c4"/></svg>
<div class="ab h1" style="left:171.6px;top:40.8px">Выдача денежных документов (создание) *</div>
<div class="ab" style="left:737.6px;top:38.8px;font-size:9.6px;color:#222;line-height:10px">×</div>
<div class="ab btn y" style="left:102.8px;top:64px;width:83.8px;height:13.2px"><b>Провести и закрыть</b></div>
<div class="ab btn" style="left:191.2px;top:64px;width:44.7px;height:13.2px">Записать</div>
<div class="ab btn" style="left:245.4px;top:64px;width:44.6px;height:13.2px">Провести</div>
<div class="ab btn" style="left:300.6px;top:64px;width:15.2px;height:13.2px"></div>
<svg class="ab" style="left:303.6px;top:66px" width="10" height="9" viewBox="0 0 10 9"><text x="0.3" y="3.6" font-size="3.7" font-weight="bold" fill="#2c4a57" font-family="Liberation Sans">ДТ</text><text x="3.2" y="7.4" font-size="3.7" font-weight="bold" fill="#2c4a57" font-family="Liberation Sans">КТ</text></svg>
<div class="ab btn" style="left:326.7px;top:64px;width:78.8px;height:13.2px;text-align:left;padding-left:14.3px;box-sizing:border-box">Расходный ордер</div>
<svg class="ab" style="left:330.4px;top:66.8px" width="8" height="7.2" viewBox="0 0 9 8"><rect x="0.4" y="2.6" width="8.2" height="3.6" rx="0.6" fill="#333"/><rect x="2" y="0.4" width="5" height="2.2" fill="#555"/><rect x="2.2" y="4.8" width="4.6" height="2.8" fill="#fff" stroke="#333" stroke-width="0.5"/></svg>
<div class="ab btn" style="left:416px;top:64px;width:14px;height:13.2px"></div>
<svg class="ab" style="left:418.6px;top:66.2px" width="9" height="8.2" viewBox="0 0 10 9"><rect x="0.6" y="0.6" width="8.6" height="7.6" fill="#dbe9f6" stroke="#8fb3d9" stroke-width="0.6"/><path d="M2.4 6.8L7.4 2" stroke="#2f68a4" stroke-width="0.9"/><path d="M1.6 2.4h3M5.4 6.4h3" stroke="#2f68a4" stroke-width="1.2"/></svg>
<div class="ab btn" style="left:687.5px;top:64px;width:31.2px;height:13.2px;text-align:left;padding-left:6.6px">Еще<span class="dd" style="position:absolute;left:24.6px;top:5.2px;border-left-width:1.4px;border-right-width:1.4px;border-top-width:1.8px"></span></div>
<div class="ab btn" style="left:723px;top:64px;width:15.8px;height:13.2px"><b>?</b></div>
<div class="ab" style="left:103.2px;top:84px;width:266px;height:14.4px;background:#fdf2cf"></div>
<div class="ab" style="left:103.2px;top:85.2px;width:52px;height:10.8px;background:#fbe3a4"></div>
<div class="ab lb" style="left:105.4px;top:88px">Вид операции:</div>
<div class="ab inp" style="left:155.5px;top:85.4px;width:211.7px;height:10.6px;padding-top:1.7px">Выдача подотчетному лицу</div>
<div class="ab vs" style="left:356.3px;top:86.4px;height:8.6px"></div><div class="ab dd" style="left:360.2px;top:90px"></div>
<div class="ab lb" style="left:102.8px;top:106.3px">Номер:</div>
<div class="ab inp" style="left:155.2px;top:104.2px;width:62.4px;height:11.7px;border-color:#dadada"></div>
<div class="ab lb" style="left:222.8px;top:106.5px">от:</div>
<div class="ab inp" style="left:234.5px;top:104.2px;width:94px;height:11.7px;padding-top:1.3px">18.09.2018&nbsp; 0:00:00</div>
<div class="ab vs" style="left:317.6px;top:105.2px;height:9.2px"></div>
<svg class="ab" style="left:319.8px;top:107.2px" width="6" height="6" viewBox="0 0 6 6"><rect x="0.5" y="0.9" width="4.6" height="4.2" fill="#fff" stroke="#333" stroke-width="0.8"/><rect x="0.5" y="0.9" width="4.6" height="1.5" fill="#333"/></svg>
<svg class="ab" style="left:335.4px;top:107px" width="8" height="6" viewBox="0 0 8 6"><path d="M0.4 0.8h6.8M0.4 2.8h6.8M0.4 4.8h6.8" stroke="#b8b8b8" stroke-width="0.9"/></svg>
<div class="ab lb" style="left:381px;top:87.8px">Счет учета:</div>
<div class="ab inp" style="left:427.7px;top:85.4px;width:50.6px;height:10.6px;padding-left:1.8px;padding-top:1.6px">50.03</div>
<div class="ab vs" style="left:467px;top:86.4px;height:8.6px"></div><div class="ab dd" style="left:470.6px;top:90px"></div>
<div class="ab inp" style="left:478.6px;top:85.4px;width:10px;height:10.6px;padding:0"></div>
<svg class="ab" style="left:480.8px;top:87.8px" width="6" height="6" viewBox="0 0 6 6"><g transform="rotate(-45 3 3)" fill="none" stroke="#555" stroke-width="0.8"><rect x="0" y="1.9" width="3.4" height="2.2" rx="1.1"/><rect x="2.6" y="1.9" width="3.4" height="2.2" rx="1.1"/></g></svg>
<div class="ab lb" style="left:494.2px;top:87.8px;color:#bdbdbd">Валюта:</div>
<div class="ab inp" style="left:524px;top:85.4px;width:67px;height:10.6px;padding-top:1.6px;color:#bdbdbd;border-color:#e0e0e0">руб.</div>
<div class="ab vs" style="left:580.6px;top:86.4px;height:8.6px;background:#e8e8e8"></div><div class="ab dd" style="left:584.2px;top:90px;border-top-color:#cccccc"></div>
<div class="ab inp" style="left:591.6px;top:85.4px;width:10.8px;height:10.6px;padding:0;border-color:#e0e0e0"></div>
<svg class="ab" style="left:594.2px;top:87.8px" width="6" height="6" viewBox="0 0 6 6"><g transform="rotate(-45 3 3)" fill="none" stroke="#cccccc" stroke-width="0.8"><rect x="0" y="1.9" width="3.4" height="2.2" rx="1.1"/><rect x="2.6" y="1.9" width="3.4" height="2.2" rx="1.1"/></g></svg>
<div class="ab lb" style="left:381px;top:106.2px">Организация:</div>
<div class="ab inp" style="left:427.7px;top:104.4px;width:212.4px;height:11.6px;padding-top:1.3px;padding-left:2px">Абрамов Г. С. ИП</div>
<div class="ab vs" style="left:617.4px;top:105.2px;height:9.6px"></div><div class="ab dd" style="left:620.8px;top:109.2px"></div>
<div class="ab vs" style="left:628px;top:105.2px;height:9.6px"></div>
<svg class="ab" style="left:631.2px;top:107px" width="6" height="6" viewBox="0 0 6 6"><g transform="rotate(-45 3 3)" fill="none" stroke="#555" stroke-width="0.8"><rect x="0" y="1.9" width="3.4" height="2.2" rx="1.1"/><rect x="2.6" y="1.9" width="3.4" height="2.2" rx="1.1"/></g></svg>
<div class="ab" style="left:103px;top:133.4px;width:637px;height:240.6px;border:1.5px solid #dcdcdc;border-bottom:none;box-sizing:border-box;background:#fff"></div>
<div class="ab ftab" style="left:103px;top:120px;width:28px;height:14px;padding-left:1px">Кому</div>
<div class="ab ftab on" style="left:133px;top:120px;width:92px;height:16.5px">Денежные документы (1)</div>
<div class="ab red" style="left:131.4px;top:119.3px;width:95.2px;height:16.6px"></div>
<div class="ab btn" style="left:110px;top:138px;width:44px;height:13px;padding-right:1.4px">Добавить</div>
<div class="ab btn" style="left:164px;top:138px;width:30.4px;height:13px"></div>
<div class="ab" style="left:179px;top:139px;width:1px;height:11px;background:#dcdcdc"></div>
<svg class="ab" style="left:168.4px;top:141.4px" width="22" height="7" viewBox="0 0 22 7"><path d="M3 0.5L0.5 3.2h1.5v3h2V3.2h1.5z" fill="#5b9ad6" stroke="#2f6aa6" stroke-width="0.5"/><path d="M18.4 6.5l-2.5-2.7h1.5v-3h2v3h1.5z" fill="#5b9ad6" stroke="#2f6aa6" stroke-width="0.5"/></svg>
<div class="ab btn" style="left:702.5px;top:138px;width:31.5px;height:13px;text-align:left;padding-left:6.6px">Еще<span class="dd" style="position:absolute;left:24.8px;top:5px;border-left-width:1.4px;border-right-width:1.4px;border-top-width:1.8px"></span></div>
<div class="ab" style="left:109.5px;top:153.4px;width:624.4px;height:220.6px;border:1px solid #d2d2d2;border-bottom:none;box-sizing:border-box;background:#fff"></div>
<div class="ab" style="left:110.5px;top:154.4px;width:622.4px;height:16.2px;background:#f1f1f1;border-bottom:1px solid #e6e6e6;box-sizing:border-box"></div>
<div class="ab" style="left:152.6px;top:154.4px;width:1px;height:16.2px;background:#e2e2e2"></div>
<div class="ab" style="left:586px;top:154.4px;width:1px;height:16.2px;background:#e2e2e2"></div>
<div class="ab" style="left:656.5px;top:154.4px;width:1px;height:16.2px;background:#e2e2e2"></div>
<div class="ab lb" style="left:117.8px;top:158px;color:#555">N</div>
<div class="ab lb" style="left:160.8px;top:158px;color:#555">Денежный документ</div>
<div class="ab lb" style="left:595px;top:158px;color:#555">Количество</div>
<div class="ab lb" style="left:664px;top:158px;color:#555">Стоимость</div>
<div class="ab" style="left:110.5px;top:170.6px;width:622.4px;height:13.2px;background:#fdf0ac"></div>
<div class="ab" style="left:153.2px;top:170.6px;width:432.8px;height:13.2px;background:#ffd821"></div>
<div class="ab lb" style="left:120px;width:24.2px;text-align:right;top:173.6px">1</div>
<div class="ab lb" style="left:160.6px;top:173.6px">ЖД Билет Москва-Рязань</div>
<div class="ab lb" style="left:600px;width:47.5px;text-align:right;top:173.6px">1,000</div>
<div class="ab lb" style="left:670px;width:56.5px;text-align:right;top:173.6px">1 000,00</div>
<div class="ab" style="left:109.3px;top:184px;width:624.6px;height:2.7px;background:#6e1026"></div>
</div>
</body></html>
